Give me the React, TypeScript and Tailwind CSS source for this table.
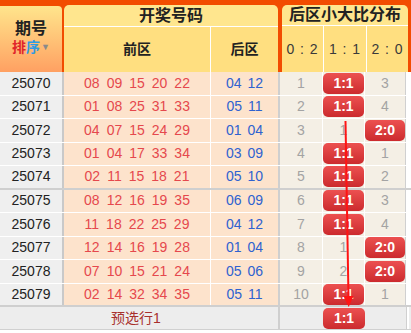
import React from "react";

type Dist = number | "1:1" | "2:0" | "0:2";

const ROWS: { issue: string; front: string[]; back: string[]; dist: Dist[] }[] = [
  { issue: "25070", front: ["08", "09", "15", "20", "22"], back: ["04", "12"], dist: [1, "1:1", 3] },
  { issue: "25071", front: ["01", "08", "25", "31", "33"], back: ["05", "11"], dist: [2, "1:1", 4] },
  { issue: "25072", front: ["04", "07", "15", "24", "29"], back: ["01", "04"], dist: [3, 1, "2:0"] },
  { issue: "25073", front: ["01", "04", "17", "33", "34"], back: ["03", "09"], dist: [4, "1:1", 1] },
  { issue: "25074", front: ["02", "11", "15", "18", "21"], back: ["05", "10"], dist: [5, "1:1", 2] },
  { issue: "25075", front: ["08", "12", "16", "19", "35"], back: ["06", "09"], dist: [6, "1:1", 3] },
  { issue: "25076", front: ["11", "18", "22", "25", "29"], back: ["04", "12"], dist: [7, "1:1", 4] },
  { issue: "25077", front: ["12", "14", "16", "19", "28"], back: ["01", "04"], dist: [8, 1, "2:0"] },
  { issue: "25078", front: ["07", "10", "15", "21", "24"], back: ["05", "06"], dist: [9, 2, "2:0"] },
  { issue: "25079", front: ["02", "14", "32", "34", "35"], back: ["05", "11"], dist: [10, "1:1", 1] },
];

const COL_W = ["w-[43px] border-r border-white", "w-[42px] border-r border-white", "w-[41px] border-r border-[#d0d0d0]"];

function Badge({ label }: { label: string }) {
  return (
    <div className="flex h-[21px] w-full items-center justify-center rounded-[5px] bg-gradient-to-b from-[#ec5050] to-[#cc2a2e] text-[14px] font-bold text-white">
      {label}
    </div>
  );
}

function Row({ row, last }: { row: (typeof ROWS)[number]; last: boolean }) {
  return (
    <div className={`flex h-[23.5px] ${last ? "border-b-2 border-[#cfcfcf]" : "border-b border-white"}`}>
      <div className="flex w-[64px] items-center justify-center border-r-2 border-[#c9c9c9] bg-[#efefef] text-[14px] text-[#222]">
        {row.issue}
      </div>
      <div className="flex w-[147px] items-center justify-center gap-[7px] border-r border-white bg-[#fde3cc] text-[14px] text-[#e5484d]">
        {row.front.map((n, i) => (
          <span key={i}>{n}</span>
        ))}
      </div>
      <div className="flex w-[69px] items-center justify-center gap-[6px] border-r-2 border-[#cfcfcf] bg-[#fde3cc] text-[14px] text-[#2f62d0]">
        {row.back.map((n, i) => (
          <span key={i}>{n}</span>
        ))}
      </div>
      {row.dist.map((d, i) => (
        <div key={i} className={`flex items-center justify-center bg-[#f4efe5] text-[14px] text-[#a3a3a3] ${COL_W[i]}`}>
          {typeof d === "number" ? d : <Badge label={d} />}
        </div>
      ))}
      <div className="w-[2px] bg-white" />
    </div>
  );
}

export default function App() {
  const font = { fontFamily: '"Liberation Sans", "Noto Sans CJK SC", sans-serif' };
  return (
    <div className="relative h-[333px] w-[411px] overflow-hidden bg-white" style={font}>
      {/* header */}
      <div className="flex h-[72px] bg-[#f24c00]">
        <div className="mt-[6px] flex w-[62px] flex-col items-center justify-center rounded-tr-[4px] bg-gradient-to-b from-[#ffe58c] to-[#ffa062] pb-[2px]">
          <div className="text-[16px] leading-[18px] font-bold text-[#222]">期号</div>
          <div className="flex items-center text-[14px] leading-[18px] font-bold">
            <span className="text-[#e0252a]">排</span>
            <span className="text-[#2f9be3]">序</span>
            <span className="ml-[1px] text-[9px] text-[#8a8a8a]">▼</span>
          </div>
        </div>
        <div className="ml-[2px] mt-[5px] flex w-[214px] flex-col overflow-hidden rounded-t-[5px]">
          <div className="flex h-[22px] items-center justify-center border-b border-white bg-[#ffe68e] text-[16px] font-bold text-[#222]">
            开奖号码
          </div>
          <div className="flex flex-1 bg-[#ffdf80] text-[14px] font-bold text-[#222]">
            <div className="flex w-[147px] items-center justify-center border-r border-white">前区</div>
            <div className="flex flex-1 items-center justify-center">后区</div>
          </div>
        </div>
        <div className="ml-[4px] mt-[5px] flex w-[126px] flex-col overflow-hidden rounded-t-[5px]">
          <div className="flex h-[21px] items-center justify-center border-b border-white bg-[#ffe68e] text-[16px] font-bold text-[#222]">
            后区小大比分布
          </div>
          <div className="flex flex-1 bg-[#ffdf80] text-[14px] tracking-[1px] text-[#3a3a3a]">
            <div className="flex w-[42px] items-center justify-center border-r border-white">0 : 2</div>
            <div className="flex w-[43px] items-center justify-center border-r border-white">1 : 1</div>
            <div className="flex flex-1 items-center justify-center">2 : 0</div>
          </div>
        </div>
      </div>

      {/* body */}
      {ROWS.map((r, i) => (
        <Row key={r.issue} row={r} last={i === 4 || i === 9} />
      ))}

      {/* footer */}
      <div className="flex h-[23px] border-b border-[#d0d0d0] bg-[#ededed]">
        <div className="flex w-[280px] items-center justify-center border-r-2 border-[#cfcfcf] pr-[6px] text-[14px] text-[#a8302c]">
          预选行1
        </div>
        <div className="w-[43px]" />
        <div className="flex w-[42px] items-center">
          <Badge label="1:1" />
        </div>
        <div className="w-[42px] border-r border-[#d0d0d0]" />
        <div className="w-[2px] bg-white" />
      </div>

      {/* trend arrow */}
      <svg className="pointer-events-none absolute left-0 top-0" width="411" height="333">
        <line x1="345.5" y1="121" x2="348.5" y2="298" stroke="#ff1414" strokeWidth="2" />
        <polygon points="343.5,296 353.5,296 348.7,307" fill="#ff1414" />
      </svg>
    </div>
  );
}
